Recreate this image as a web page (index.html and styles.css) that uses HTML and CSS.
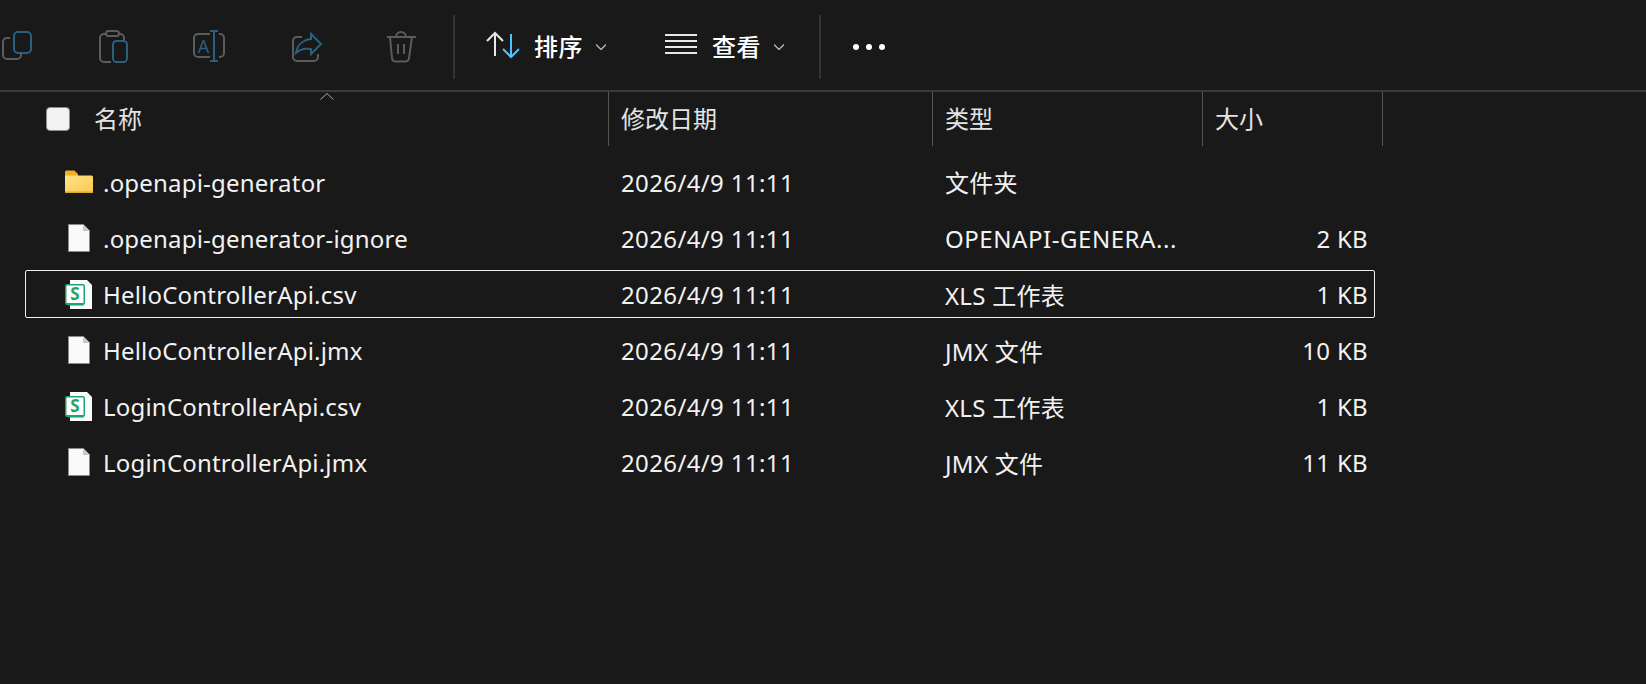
FILE: index.html
```html
<!DOCTYPE html>
<html lang="zh-CN">
<head>
  <meta charset="UTF-8">
  <title>文件资源管理器</title>
  <link rel="stylesheet" href="styles.css">
</head>
<body>
  <div class="toolbar">
    <div class="tool-icons">
      <svg class="icon" viewBox="0 0 32 32"><path class="dim" d="M9 7H6a4 4 0 0 0-4 4v13a4 4 0 0 0 4 4h10a4 4 0 0 0 4-4v-1"/><rect class="blue" x="13" y="1" width="17" height="21" rx="4"/></svg>
      <svg class="icon" viewBox="0 0 32 32"><path class="dim" d="M10 3H7a4 4 0 0 0-4 4v20a4 4 0 0 0 4 4h7M22 3h1a4 4 0 0 1 4 4v2"/><rect class="dim" x="9" y="0" width="13" height="5" rx="2.5"/><rect class="blue" x="16" y="10" width="14" height="21" rx="3.5"/></svg>
      <svg class="icon" viewBox="0 0 32 32"><path class="dim" d="M17 3H5a4 4 0 0 0-4 4v15a4 4 0 0 0 4 4h12M26 3h1a4 4 0 0 1 4 4v15a4 4 0 0 1-4 4h-1"/><path class="blue" d="M17 0h8M21 0v30M17 30h8"/><text class="icon-letter" x="10.5" y="21.5">A</text></svg>
      <svg class="icon" viewBox="0 0 32 32"><path class="dim" d="M13 6H8a4 4 0 0 0-4 4v16a4 4 0 0 0 4 4h17a4 4 0 0 0 4-4v-3"/><path class="blue" d="M22 3l10 10-10 10v-5c-6-1-11 0-15 4 1-8 7-13 15-14z"/></svg>
      <svg class="icon" viewBox="0 0 32 32"><path class="dim" d="M2 6h29M5 6l2 21a3.500 3.500 0 0 0 3.500 3.500h10a3.500 3.500 0 0 0 3.500-3.500l3-21M11 6a5 5 0 0 1 10 0M13 13v10M19 13v10"/></svg>
    </div>
    <div class="sep first"></div>
    <button class="menu-btn">
      <svg class="icon" viewBox="0 0 32 32"><path class="light" d="M8 3v22M0 10l8-8 8 8"/><path class="accent" d="M24 3v23M16 18l8 8 8-8"/></svg>
      <span class="menu-label">排序</span>
      <svg class="chev" viewBox="0 0 10 6"><path d="M0 .5l5 5 5-5"/></svg>
    </button>
    <button class="menu-btn view">
      <svg class="icon" viewBox="0 0 32 32"><path class="light" d="M0 4h32M0 10h32M0 16h32M0 22h32"/></svg>
      <span class="menu-label">查看</span>
      <svg class="chev" viewBox="0 0 10 6"><path d="M0 .5l5 5 5-5"/></svg>
    </button>
    <div class="sep second"></div>
    <div class="more"><i></i><i></i><i></i></div>
  </div>

  <div class="table-head">
    <div class="head-cell name-col">
      <span class="checkbox"></span>
      <span class="head-label">名称</span>
      <svg class="sort-caret" viewBox="0 0 14 7"><path d="M.5 6.500l6.500-6 6.500 6"/></svg>
    </div>
    <div class="head-cell date-col"><span class="head-label">修改日期</span></div>
    <div class="head-cell type-col"><span class="head-label">类型</span></div>
    <div class="head-cell size-col"><span class="head-label">大小</span></div>
  </div>

  <div class="rows">
    <div class="row">
      <div class="name-col name-cell">
        <svg class="file-icon" viewBox="0 0 28 32">
          <defs><linearGradient id="folder-front" x1="0" y1="0" x2="1" y2="1"><stop offset="0" stop-color="#ffe28a"/><stop offset="1" stop-color="#f9c94e"/></linearGradient></defs>
          <path fill="#f5b021" d="M0 6a1.500 1.500 0 0 1 1.500-1.500h8L13 8v3H0z"/><path fill="url(#folder-front)" d="M0 9.500h26.500A1.500 1.500 0 0 1 28 11v14.500a1.500 1.500 0 0 1-1.500 1.500h-25A1.500 1.500 0 0 1 0 25.500z"/><path fill="#e3a92b" d="M0 25.500h28v.5a1 1 0 0 1-1 1H1a1 1 0 0 1-1-1z"/>
        </svg>
        <span>.openapi-generator</span>
      </div>
      <div class="date-col">2026/4/9 11:11</div>
      <div class="type-col"><span class="cjk-text">文件夹</span></div>
      <div class="size-col"></div>
    </div>
    <div class="row">
      <div class="name-col name-cell">
        <svg class="file-icon" viewBox="0 0 28 32"><path fill="#fafafa" stroke="#8a8a8a" d="M3.500 2.500h15l6 6v21h-21z"/><path fill="#c9c9c9" d="M18 2.500l6.500 6.500H18z"/></svg>
        <span>.openapi-generator-ignore</span>
      </div>
      <div class="date-col">2026/4/9 11:11</div>
      <div class="type-col type-cut">OPENAPI-GENERA...</div>
      <div class="size-col">2 KB</div>
    </div>
    <div class="row selected">
      <div class="name-col name-cell">
        <svg class="file-icon" viewBox="0 0 28 32"><path fill="#fafafa" d="M5 2h17l5 5v24H5z"/><rect x=".750" y="6.750" width="18.500" height="19.500" rx="1.500" fill="#fff" stroke="#1aa56c" stroke-width="1.500"/><path fill="#1aa56c" d="M1 25h18v1.500a1 1 0 0 1-1 1H3z"/><text class="xls-letter" x="10" y="21.500">S</text></svg>
        <span>HelloControllerApi.csv</span>
      </div>
      <div class="date-col">2026/4/9 11:11</div>
      <div class="type-col">XLS 工作表</div>
      <div class="size-col">1 KB</div>
    </div>
    <div class="row">
      <div class="name-col name-cell">
        <svg class="file-icon" viewBox="0 0 28 32"><path fill="#fafafa" stroke="#8a8a8a" d="M3.500 2.500h15l6 6v21h-21z"/><path fill="#c9c9c9" d="M18 2.500l6.500 6.500H18z"/></svg>
        <span>HelloControllerApi.jmx</span>
      </div>
      <div class="date-col">2026/4/9 11:11</div>
      <div class="type-col">JMX 文件</div>
      <div class="size-col">10 KB</div>
    </div>
    <div class="row">
      <div class="name-col name-cell">
        <svg class="file-icon" viewBox="0 0 28 32"><path fill="#fafafa" d="M5 2h17l5 5v24H5z"/><rect x=".750" y="6.750" width="18.500" height="19.500" rx="1.500" fill="#fff" stroke="#1aa56c" stroke-width="1.500"/><path fill="#1aa56c" d="M1 25h18v1.500a1 1 0 0 1-1 1H3z"/><text class="xls-letter" x="10" y="21.500">S</text></svg>
        <span>LoginControllerApi.csv</span>
      </div>
      <div class="date-col">2026/4/9 11:11</div>
      <div class="type-col">XLS 工作表</div>
      <div class="size-col">1 KB</div>
    </div>
    <div class="row">
      <div class="name-col name-cell">
        <svg class="file-icon" viewBox="0 0 28 32"><path fill="#fafafa" stroke="#8a8a8a" d="M3.500 2.500h15l6 6v21h-21z"/><path fill="#c9c9c9" d="M18 2.500l6.500 6.500H18z"/></svg>
        <span>LoginControllerApi.jmx</span>
      </div>
      <div class="date-col">2026/4/9 11:11</div>
      <div class="type-col">JMX 文件</div>
      <div class="size-col">11 KB</div>
    </div>
  </div>
</body>
</html>
```
FILE: styles.css
```css
html, body {
  height: 100%;
}

body {
  margin: 0;
  overflow: hidden;
  background-color: #191919;
  color: #f2f2f2;
  font-family: "Noto Sans", "Noto Sans CJK SC", sans-serif;
  font-size: 24px;
}

/* Command bar */
.toolbar {
  display: flex;
  align-items: center;
  height: 86px;
  padding: 4px 0 0 1px;
  border-bottom: 2px solid #3b3b3b;
}

.tool-icons {
  display: flex;
  gap: 64px;
}

.icon {
  display: block;
  width: 32px;
  height: 32px;
  overflow: visible;
  fill: none;
  stroke-width: 2;
}

.dim {
  stroke: #5c5c5c;
}

.blue {
  stroke: #2b5f80;
}

.light {
  stroke: #e8e8e8;
}

.accent {
  stroke: #4cc2ff;
}

.icon-letter {
  fill: #2b5f80;
  font-size: 18px;
  text-anchor: middle;
}

.sep {
  width: 2px;
  height: 64px;
  background-color: #333;
}

.sep.first {
  margin: 0 32px 0 36px;
}

.sep.second {
  margin: 0 32px 0 35px;
}

.menu-btn {
  display: flex;
  align-items: center;
  padding: 0;
  border: 0;
  background: none;
  color: #fff;
  font: inherit;
}

.menu-btn.view {
  margin-left: 59px;
}

.menu-label {
  margin-left: 15px;
  font-weight: 500;
  letter-spacing: .5px;
  line-height: 32px;
}

.chev {
  width: 10px;
  height: 6px;
  margin-left: 13px;
  fill: none;
  stroke: #b5b5b5;
  stroke-width: 1.400;
}

.more {
  display: flex;
  gap: 7px;
}

.more i {
  width: 6px;
  height: 6px;
  border-radius: 50%;
  background-color: #fff;
}

.table-head,
.row {
  display: grid;
  align-items: center;
}

.table-head {
  grid-template-columns: 609px 324px 270px 180px;
  width: 1383px;
  height: 54px;
  color: #e4e4e4;
}

.head-cell {
  display: flex;
  align-items: center;
  height: 100%;
  padding-left: 12px;
  border-right: 1px solid #555;
  box-sizing: border-box;
}

.head-cell.name-col {
  position: relative;
  padding-left: 46px;
}

.head-label {
  margin-bottom: 4px;
}

.checkbox {
  width: 22px;
  height: 22px;
  margin-right: 24px;
  border: 1px solid #8b8b8b;
  border-radius: 4px;
  background-color: #f3f3f3;
}

.sort-caret {
  position: absolute;
  left: 320px;
  top: 1px;
  width: 14px;
  height: 7px;
  fill: none;
  stroke: #a8a8a8;
  stroke-width: 1;
}

.rows {
  display: flex;
  flex-direction: column;
  gap: 8px;
  width: 1350px;
  margin: 12px 0 0 25px;
}

.row {
  grid-template-columns: 583px 324px 270px 173px;
  height: 48px;
  border: 1px solid transparent;
  box-sizing: border-box;
}

.row.selected {
  border-color: #efefef;
  border-radius: 2px;
}

.row > div {
  box-sizing: border-box;
  padding-left: 12px;
  white-space: nowrap;
}

.row > .name-cell {
  display: flex;
  align-items: center;
  gap: 10px;
  padding-left: 39px;
  letter-spacing: .2px;
}

.row > .date-col {
  letter-spacing: .37px;
}

.row > .type-col {
  letter-spacing: .3px;
}

.row > .type-cut {
  letter-spacing: .55px;
}

.row > .size-col {
  padding: 0 8px 0 0;
  letter-spacing: .3px;
  text-align: right;
}

.cjk-text {
  display: block;
  margin-bottom: 2px;
}

.file-icon {
  display: block;
  flex: none;
  width: 28px;
  height: 32px;
}

.xls-letter {
  fill: #1aa56c;
  font-size: 17px;
  font-weight: 700;
  text-anchor: middle;
}
```
